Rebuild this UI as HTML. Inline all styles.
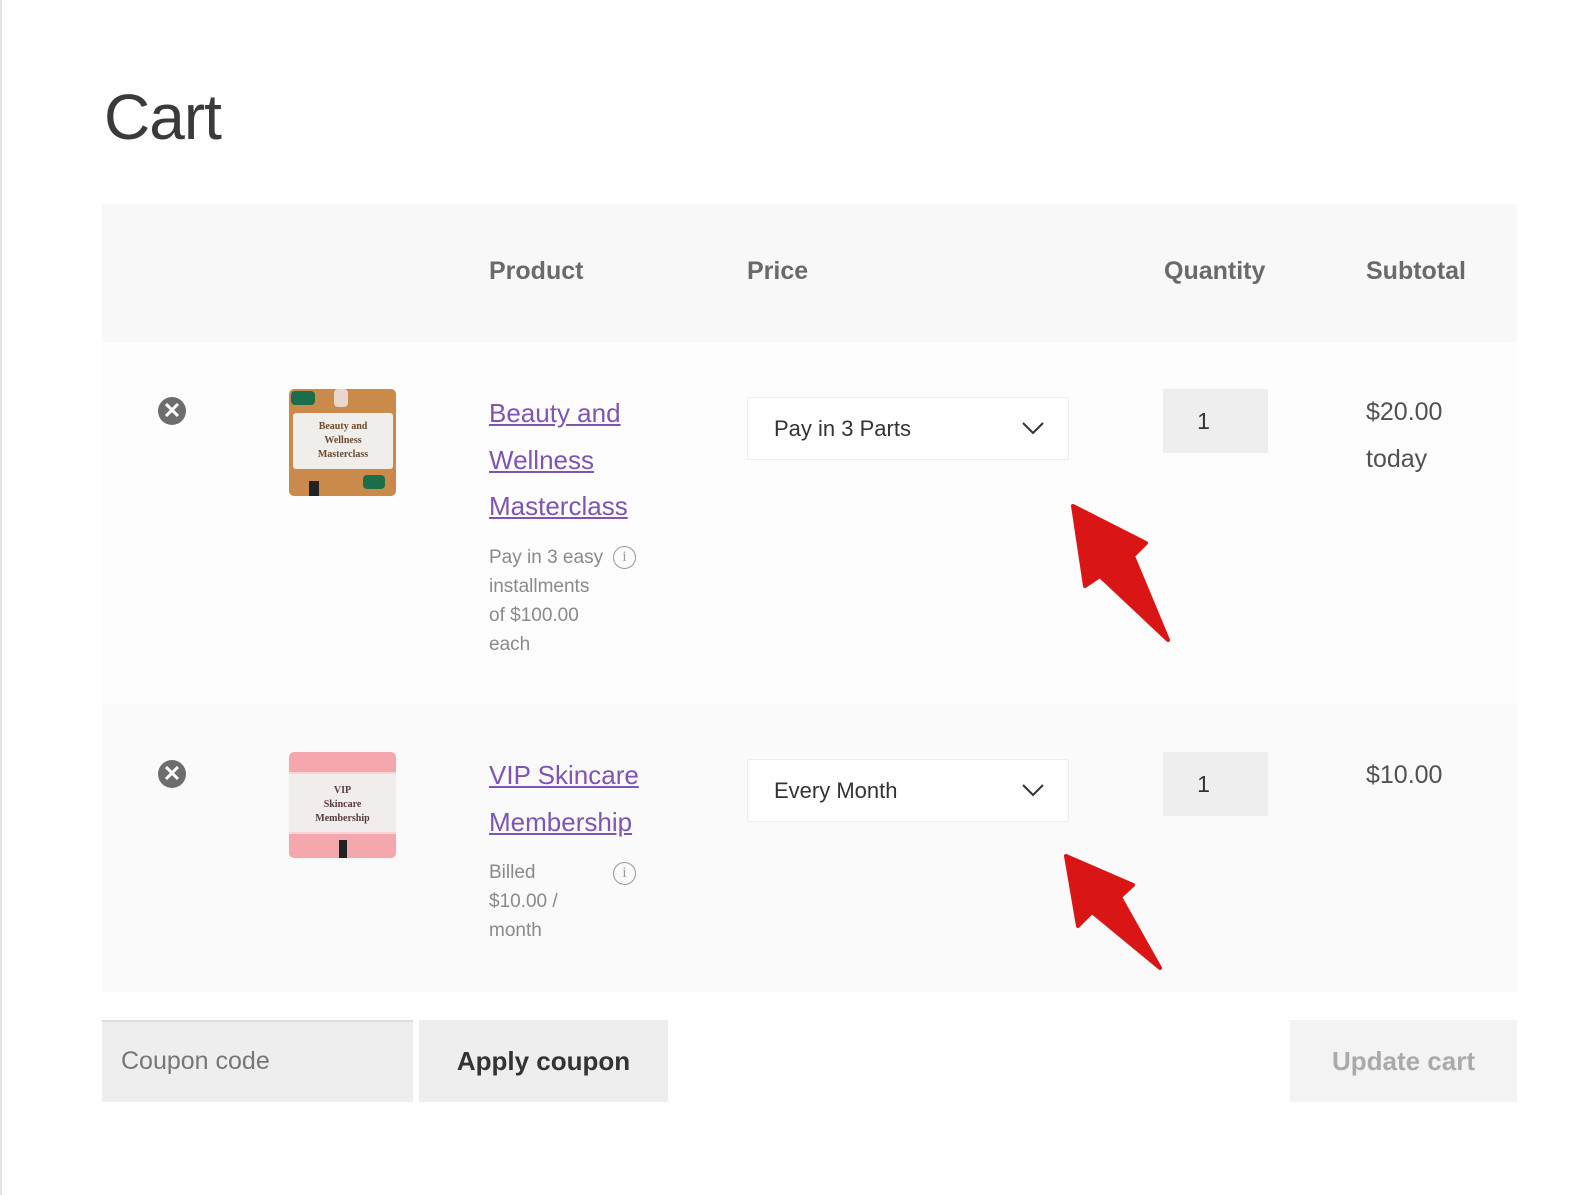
<!DOCTYPE html>
<html><head><style>
body{margin:0;width:1569px;height:1195px;background:#fff;font-family:"Liberation Sans",sans-serif;position:relative;overflow:hidden;color:#515151}
.a{position:absolute}
.edge{left:0;top:0;width:2px;height:1195px;background:#e4e4e4}
h1{position:absolute;left:104px;top:80px;margin:0;font-weight:normal;font-size:64px;color:#3a3a3a;letter-spacing:-1px}
.th{top:204px;left:102px;width:1415px;height:138px;background:#f8f8f8}
.r1{top:342px;left:102px;width:1415px;height:362px;background:#fdfdfd}
.r2{top:704px;left:102px;width:1415px;height:288px;background:#fafafa}
.hd{top:257px;font-size:25px;font-weight:bold;color:#6a6a6a}
.x{width:28px;height:28px;border-radius:50%;background:#6d6d6d;color:#fff;font-size:22px;font-weight:bold;text-align:center;line-height:28px}
.link{color:#7f54b3;text-decoration:underline;font-size:26px;line-height:46.5px}
.meta{font-size:19px;color:#8a8a8a;line-height:29px}
.sel{width:322px;height:63px;background:#fff;border:1px solid #eee;box-sizing:border-box;font-size:22px;color:#333;padding-left:26px;line-height:62px}
.qty{width:105px;height:64px;background:#eee;font-size:23px;color:#333;text-align:center;line-height:64px;padding-right:24px;box-sizing:border-box}
.sub{font-size:25px;color:#515151;line-height:47px}
.info{width:21px;height:21px;border:1.5px solid #999;border-radius:50%;color:#999;font-size:15px;text-align:center;line-height:21px;font-family:"Liberation Serif",serif}
</style></head><body>
<div class="a edge"></div>
<h1>Cart</h1>
<div class="a th"></div><div class="a r1"></div><div class="a r2"></div>
<div class="a hd" style="left:489px">Product</div>
<div class="a hd" style="left:747px">Price</div>
<div class="a hd" style="left:1164px">Quantity</div>
<div class="a hd" style="left:1366px">Subtotal</div>

<div class="a x" style="left:158px;top:397px">✕</div>
<div class="a" style="left:289px;top:389px;width:107px;height:107px;border-radius:5px;background:#c98a4b;overflow:hidden">
<div class="a" style="left:4px;top:24px;width:100px;height:56px;background:#f0eeeb;border-radius:3px;font-family:'Liberation Serif',serif;font-weight:bold;font-size:10px;color:#6b4a30;text-align:center;line-height:14px;padding-top:7px;box-sizing:border-box">Beauty and<br>Wellness<br>Masterclass</div>
<div class="a" style="left:2px;top:2px;width:24px;height:14px;background:#1c6e4a;border-radius:4px"></div>
<div class="a" style="left:74px;top:86px;width:22px;height:14px;background:#1c6e4a;border-radius:4px"></div>
<div class="a" style="left:45px;top:0;width:14px;height:18px;background:#e9d6cf;border-radius:4px"></div>
<div class="a" style="left:20px;top:92px;width:10px;height:15px;background:#222"></div>
</div>
<div class="a" style="left:489px;top:390px"><a class="link">Beauty and<br>Wellness<br>Masterclass</a></div>
<div class="a meta" style="left:489px;top:543px">Pay in 3 easy<br>installments<br>of $100.00<br>each</div>
<div class="a info" style="left:613px;top:546px">i</div>
<div class="a sel" style="left:747px;top:397px">Pay in 3 Parts</div>
<svg class="a" style="left:1021px;top:420px" width="24" height="16"><path d="M2 3l10 10 10-10" stroke="#333" stroke-width="2" fill="none"/></svg>
<div class="a qty" style="left:1163px;top:389px">1</div>
<div class="a sub" style="left:1366px;top:389px">$20.00<br>today</div>

<div class="a x" style="left:158px;top:760px">✕</div>
<div class="a" style="left:289px;top:752px;width:107px;height:106px;border-radius:5px;background:#f4a7ad;overflow:hidden">
<div class="a" style="left:0;top:20px;width:107px;height:62px;background:#f1eded;border-top:2px solid #fbd4d6;border-bottom:2px solid #fbd4d6;font-family:'Liberation Serif',serif;font-weight:bold;font-size:10px;color:#5a3a3a;text-align:center;line-height:14px;padding-top:10px;box-sizing:border-box">VIP<br>Skincare<br>Membership</div>
<div class="a" style="left:50px;top:88px;width:8px;height:18px;background:#222"></div>
</div>
<div class="a" style="left:489px;top:752px"><a class="link">VIP Skincare<br>Membership</a></div>
<div class="a meta" style="left:489px;top:858px">Billed<br>$10.00 /<br>month</div>
<div class="a info" style="left:613px;top:862px">i</div>
<div class="a sel" style="left:747px;top:759px">Every Month</div>
<svg class="a" style="left:1021px;top:782px" width="24" height="16"><path d="M2 3l10 10 10-10" stroke="#333" stroke-width="2" fill="none"/></svg>
<div class="a qty" style="left:1163px;top:752px">1</div>
<div class="a sub" style="left:1366px;top:752px">$10.00</div>

<div class="a" style="left:102px;top:1020px;width:311px;height:82px;background:#eee;border-top:2px solid #ddd;box-sizing:border-box;font-size:25px;color:#777;line-height:78px;padding-left:19px">Coupon code</div>
<div class="a" style="left:419px;top:1020px;width:249px;height:82px;background:#eee;font-size:26px;font-weight:bold;color:#333;line-height:82px;text-align:center">Apply coupon</div>
<div class="a" style="left:1290px;top:1020px;width:227px;height:82px;background:#f3f3f3;font-size:26px;font-weight:bold;color:#aaa;line-height:82px;text-align:center">Update cart</div>

<svg class="a" style="left:0;top:0" width="1569" height="1195">
<path d="M1073 506 L1146 543 L1133 556 L1168 640 L1100 576 L1085 586 Z" fill="#da1515" stroke="#da1515" stroke-width="4" stroke-linejoin="round"/>
<path d="M1066 856 L1133 885 L1120 897 L1160 968 L1092 912 L1078 926 Z" fill="#da1515" stroke="#da1515" stroke-width="4" stroke-linejoin="round"/>
</svg>
</body></html>
